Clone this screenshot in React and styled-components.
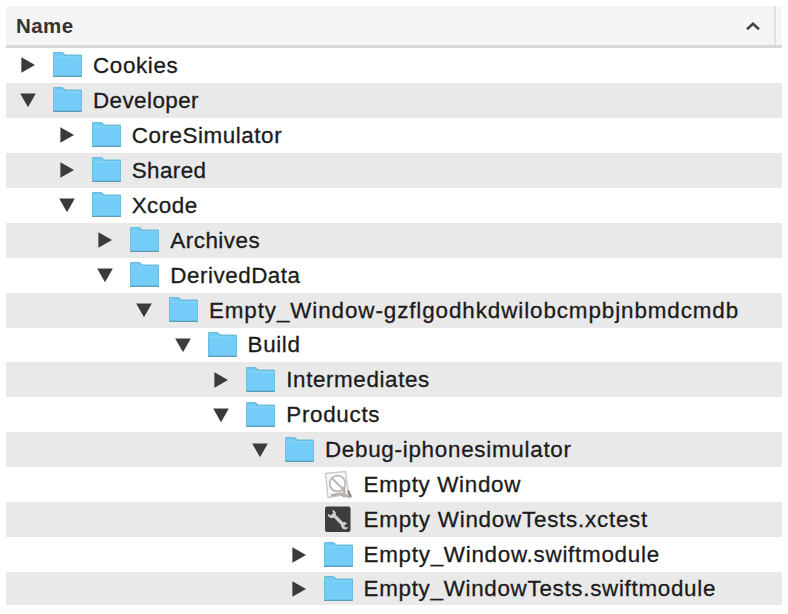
import React from 'react';
import styled, { createGlobalStyle } from 'styled-components';

const GlobalStyle = createGlobalStyle`
  body { margin: 0; background: #fff; }
`;

const Panel = styled.main`
  box-sizing: border-box;
  width: 788px;
  height: 614px;
  padding: 6px 6px 9px;
  overflow: hidden;
  font-family: "Liberation Sans", Arial, sans-serif;
  color: #1b1b1b;
`;

const Header = styled.header`
  box-sizing: border-box;
  display: flex;
  align-items: stretch;
  height: 42px;
  background: #f5f5f5;
  border-bottom: 3px solid #d7d7d7;
`;

const HeaderLabel = styled.div`
  flex: 1;
  padding-left: 10px;
  font-size: 20.5px;
  font-weight: 700;
  line-height: 40px;
  letter-spacing: 0.4px;
  color: #333;
`;

const SortCaret = styled.svg`
  align-self: center;
  width: 16px;
  height: 12px;
  margin-right: 13px;
`;

const ColumnDivider = styled.div`
  width: 8px;
  box-sizing: border-box;
  border-left: 2px solid #e2e2e2;
`;

const Tree = styled.ul`
  display: grid;
  grid-template-rows: repeat(15, 34.95px) 33px;
  margin: 0;
  padding: 0;
  list-style: none;
`;

const Row = styled.li`
  display: flex;
  align-items: center;
  min-height: 0;
  padding-left: ${({ $level }) => 13 + $level * 38.65}px;
  background: #fff;
  &:nth-child(even) { background: #e9e9e9; }
`;

const Disclosure = styled.svg`
  flex: none;
  width: 18px;
  height: 18px;
  margin-right: 15px;
  fill: #3b3b3b;
`;

const IconSlot = styled.svg`
  flex: none;
  width: 32px;
  height: 30px;
  margin-right: 9px;
`;

const Label = styled.span`
  padding-top: 1px;
  font-size: 22.4px;
  line-height: 34px;
  letter-spacing: ${({ $tracking }) => $tracking + 0.33}px;
  -webkit-text-stroke: 0.3px currentColor;
  white-space: pre;
`;

function Arrow({ state }) {
  return (
    <Disclosure viewBox="0 0 18 18">
      {state === 'closed' && <path d="M2.4 1.2 16 9 2.4 16.8Z" />}
      {state === 'open' && <path d="M1.2 2.6H16.8L9 16.2Z" />}
    </Disclosure>
  );
}

function FolderIcon() {
  return (
    <IconSlot viewBox="0 0 32 30">
      <path d="M1 3.2Q1 2 2.2 2H10.5L13.5 4.5H29Q30 4.5 30 5.5V25.5Q30 27 29 27H2Q1 27 1 26Z" fill="#6dbde0" />
      <path d="M2 3.5H10L13 6.5H29V25.5H2Z" fill="#74cdf8" />
      <path d="M2 6.8H29" stroke="#85d6f8" />
      <path d="M1.3 26.4H29.7" stroke="#5b9cbb" strokeWidth="1.2" />
    </IconSlot>
  );
}

function AppIcon() {
  return (
    <IconSlot viewBox="0 0 32 30">
      <path d="M2.5 3.5 22.5 1.5 25.5 24.5 5 27.5Z" fill="#f7f7f7" stroke="#c9c9c9" strokeWidth="1.3" />
      <circle cx="14.5" cy="13.5" r="7.8" fill="#fff" stroke="#b7b7b7" strokeWidth="1.8" />
      <path d="M9 8.2 20 19" stroke="#bcbcbc" strokeWidth="2.2" />
      <path d="M8 25.5 19 23.5M21 18V27.5M17 24 27 27" stroke="#b4afa9" strokeWidth="2.6" />
      <path d="M25 20.5 28 27" stroke="#847870" strokeWidth="2" />
    </IconSlot>
  );
}

function TestIcon() {
  return (
    <IconSlot viewBox="0 0 32 30">
      <rect x="2" y="1.5" width="25.5" height="25.5" rx="2" fill="#3d3d3f" />
      <path d="M9.5 9 20.5 20" stroke="#cecece" strokeWidth="3.2" />
      <path d="M9.3 4.6 10.2 8.3 7.8 10.2 4.6 8.8Q4.8 13 9 13.2 13.8 12 12.8 8 12 5.2 9.3 4.6Z" fill="#cecece" />
      <path d="M18.5 18.2Q21.5 15.8 24.4 18.6L21.3 20.2 22 22.2 25.2 22.2Q23.6 25.4 20.2 24.1 17.2 22.3 18.5 18.2Z" fill="#cecece" />
    </IconSlot>
  );
}

const icons = { folder: FolderIcon, app: AppIcon, test: TestIcon };

const items = [
  { name: 'Cookies', level: 0, state: 'closed', tracking: 0.3 },
  { name: 'Developer', level: 0, state: 'open', tracking: 0.1 },
  { name: 'CoreSimulator', level: 1, state: 'closed', tracking: 0.24 },
  { name: 'Shared', level: 1, state: 'closed', tracking: 0.1 },
  { name: 'Xcode', level: 1, state: 'open', tracking: 0.2 },
  { name: 'Archives', level: 2, state: 'closed', tracking: 0.17 },
  { name: 'DerivedData', level: 2, state: 'open', tracking: 0.2 },
  { name: 'Empty_Window-gzflgodhkdwilobcmpbjnbmdcmdb', level: 3, state: 'open', tracking: 0.58 },
  { name: 'Build', level: 4, state: 'open', tracking: 0.3 },
  { name: 'Intermediates', level: 5, state: 'closed', tracking: 0.28 },
  { name: 'Products', level: 5, state: 'open', tracking: 0.37 },
  { name: 'Debug-iphonesimulator', level: 6, state: 'open', tracking: 0.4 },
  { name: 'Empty Window', level: 7, icon: 'app', tracking: 0.35 },
  { name: 'Empty WindowTests.xctest', level: 7, icon: 'test', tracking: 0.43 },
  { name: 'Empty_Window.swiftmodule', level: 7, state: 'closed', tracking: 0.4 },
  { name: 'Empty_WindowTests.swiftmodule', level: 7, state: 'closed', tracking: 0.37 },
];

function TreeItem({ name, level, state, icon = 'folder', tracking }) {
  const Icon = icons[icon];
  return (
    <Row $level={level}>
      <Arrow state={state} />
      <Icon />
      <Label $tracking={tracking}>{name}</Label>
    </Row>
  );
}

export default function App() {
  return (
    <>
      <GlobalStyle />
      <Panel>
        <Header>
          <HeaderLabel>Name</HeaderLabel>
          <SortCaret viewBox="0 0 16 12">
            <path d="M2 9.2 8 3.8 14 9.2" fill="none" stroke="#444" strokeWidth="2.5" />
          </SortCaret>
          <ColumnDivider />
        </Header>
        <Tree>
          {items.map((item) => <TreeItem key={item.name} {...item} />)}
        </Tree>
      </Panel>
    </>
  );
}
